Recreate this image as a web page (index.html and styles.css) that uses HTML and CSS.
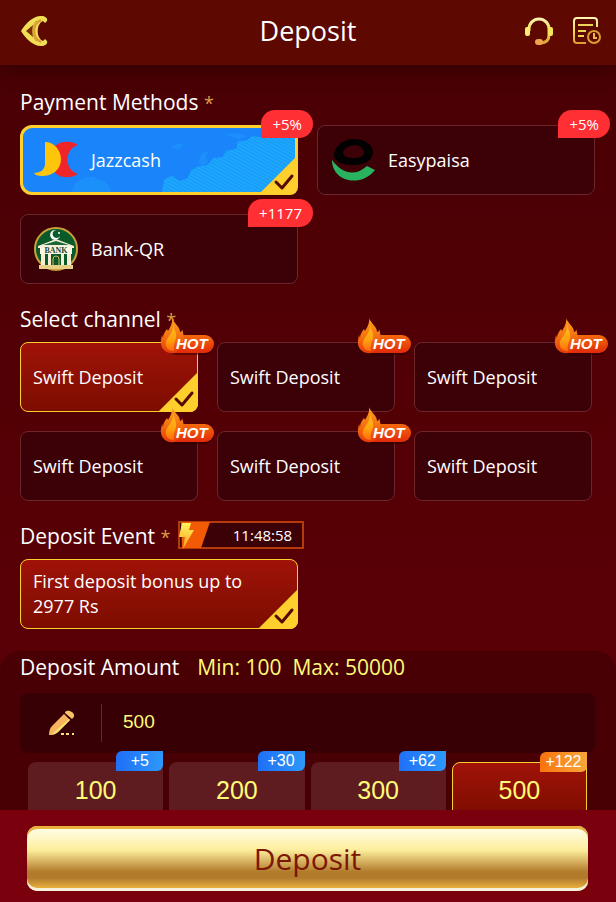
FILE: index.html
```html
<!DOCTYPE html>
<html lang="en">
<head>
    <meta charset="UTF-8">
    <meta name="viewport" content="width=device-width, initial-scale=1.0">
    <title>Deposit</title>
    <link rel="stylesheet" href="styles.css">
</head>
<body>
    <!-- shared icons -->
    <svg class="sprite" aria-hidden="true">
        <defs>
            <linearGradient id="goldLine" gradientUnits="userSpaceOnUse" x1="0" y1="0" x2="0" y2="30">
                <stop offset="0" stop-color="#fff9c0"/>
                <stop offset=".5" stop-color="#f3dc55"/>
                <stop offset="1" stop-color="#d8902a"/>
            </linearGradient>
            <linearGradient id="pill" x1="0" y1="0" x2="0" y2="1">
                <stop offset="0" stop-color="#f4690c"/>
                <stop offset="1" stop-color="#e12a0b"/>
            </linearGradient>
            <linearGradient id="flame" x1="0" y1="0" x2="0" y2="1">
                <stop offset="0" stop-color="#ffa51f"/>
                <stop offset=".6" stop-color="#f26a0f"/>
                <stop offset="1" stop-color="#e63a0b"/>
            </linearGradient>
            <linearGradient id="flameIn" x1="0" y1="0" x2="0" y2="1">
                <stop offset="0" stop-color="#ffbf1c"/>
                <stop offset=".6" stop-color="#ffa10f"/>
                <stop offset="1" stop-color="#ff6a0c"/>
            </linearGradient>
            <linearGradient id="bolt" x1="0" y1="0" x2="0" y2="1">
                <stop offset="0" stop-color="#fff45e"/>
                <stop offset="1" stop-color="#ff9d1c"/>
            </linearGradient>
            <pattern id="mesh" width="3" height="3" patternUnits="userSpaceOnUse" patternTransform="rotate(28)">
                <rect width="3" height="3" fill="#1b9cfb"/>
                <rect width="3" height="1" fill="#1aaffb"/>
            </pattern>
        </defs>
        <symbol id="tick" viewBox="0 0 40 40">
            <path d="M40 0v32a8 8 0 0 1-8 8H0z" fill="#ffcf2d"/>
            <path d="M18 27l6 6 10-12" fill="none" stroke="#560a05" stroke-width="3" stroke-linecap="round" stroke-linejoin="round"/>
        </symbol>
        <symbol id="hot" viewBox="0 0 56 40">
            <rect x="6" y="20" width="48" height="18" rx="9" fill="#2a0002" opacity=".5"/>
            <rect x="4" y="18" width="50" height="18" rx="9" fill="url(#pill)"/>
            <path d="M12 0c0 5 8 9 8 15 2-1 2-1 2-3 3 7 1 15-2 19-3 4-6 6-10 5C4 35 0 30 1 23l1-5 1 3c0-4 2-6 4-9l1 2c3-5 5-9 4-14z" fill="url(#flame)"/>
            <path d="M13 7c1 6 4 8 3 14-1 4-3 7-2 13-6 0-9-4-8-9s8-9 7-18z" fill="url(#flameIn)"/>
        </symbol>
    </svg>

    <div class="app">
        <header class="header">
            <button class="icon-btn back" type="button" aria-label="Back">
                <svg width="28" height="32" viewBox="0 0 28 32">
                    <path d="M1 16C6 8 13 1 21 1c4 0 7 2 6 5l-2 2-2-2c-7 3-7 17 0 20l2-2 2 2c1 3-2 5-6 5C13 31 6 24 1 16z" fill="#f0df55"/>
                    <path d="M21 5c-9 4-9 18 0 22" fill="none" stroke="#d9982f" stroke-width="2"/>
                    <path d="M17 6c-5 5-5 15 0 20" fill="none" stroke="#dca538" stroke-width="2"/>
                    <path d="M6 16l7-6c-1 4-1 8 0 12z" fill="#7d2c06"/>
                </svg>
            </button>
            <h1 class="header-title">Deposit</h1>
            <div class="header-actions">
                <button class="icon-btn" type="button" aria-label="Support">
                    <svg width="30" height="30" viewBox="0 0 30 30">
                        <path d="M5 15v-2a10 10 0 0 1 20 0v6c0 5-3 8-9 8" fill="none" stroke="url(#goldLine)" stroke-width="3"/>
                        <rect x="1" y="11" width="5" height="9" rx="2" fill="#f8ed70"/>
                        <rect x="24" y="11" width="5" height="9" rx="2" fill="#f5e45c"/>
                        <rect x="11" y="23" width="8" height="6" rx="3" fill="#efa34c"/>
                    </svg>
                </button>
                <button class="icon-btn" type="button" aria-label="Records">
                    <svg width="30" height="30" viewBox="0 0 30 30">
                        <path d="M25 11V5a3 3 0 0 0-3-3H5a3 3 0 0 0-3 3v19a3 3 0 0 0 3 3h9" fill="none" stroke="url(#goldLine)" stroke-width="2"/>
                        <path d="M6 9h15M6 15h8M6 20h6" stroke="#eed354" stroke-width="2"/>
                        <circle cx="22" cy="21" r="6" fill="none" stroke="#d99d30" stroke-width="2"/>
                        <path d="M22 17v5h3" fill="none" stroke="#e9bd45" stroke-width="2"/>
                    </svg>
                </button>
            </div>
        </header>

        <main class="content">
            <section class="section">
                <h2 class="section-title">Payment Methods <span class="star">*</span></h2>
                <div class="grid methods">
                    <label class="card card-blue">
                        <input class="card-radio" type="radio" name="method" checked>
                        <svg class="card-map" viewBox="0 0 270 62" preserveAspectRatio="none" aria-hidden="true">
                            <path d="M138 62l2-12 8-4 7 5 8-2 4-8 7-4 9-1 6-7 9-1 4-6 10-2 1-7 9-1 5-4 14 1 6-3 14 2 9-1v55z" fill="url(#mesh)"/>
                            <path d="M174 34l3-9 7-3-3 6 3 5-6 4zM146 18l9-3 5 1-6 5zM200 6l13-1 9 3-8 3zM48 62l4-9 9-5 8-1 5 3 7 2 4 4 2 6z" fill="#1b90fa"/>
                        </svg>
                        <svg class="card-logo" viewBox="0 0 44 44" aria-hidden="true">
                            <path d="M21 8c5-5 16-6 23-1-14 4-14 25 0 29-7 5-18 4-23-1z" fill="#f0252a"/>
                            <path d="M11 4c8-1 16 8 16 17 0 11-9 17-19 17-4 0-7-1-8-3 7 0 11-4 11-9z" fill="#ffc50a"/>
                        </svg>
                        <span class="card-name">Jazzcash</span>
                        <svg class="card-tick" aria-hidden="true"><use href="#tick"/></svg>
                        <span class="bonus">+5%</span>
                    </label>
                    <label class="card">
                        <input class="card-radio" type="radio" name="method">
                        <svg class="card-logo" viewBox="0 0 44 44" aria-hidden="true">
                            <path fill-rule="evenodd" d="M23 1c11 0 19 6 19 13 0 8-8 13-19 13S3 24 3 17C3 9 12 1 23 1zm1 6c-6 0-12 4-12 8 0 3 4 5 10 5 7 0 11-2 11-5 0-4-4-8-9-8z" fill="#000"/>
                            <path d="M1 22c11 15 24 16 35 6l8 4C30 50 1 44 1 22z" fill="#2ab35e"/>
                        </svg>
                        <span class="card-name">Easypaisa</span>
                        <span class="bonus">+5%</span>
                    </label>
                    <label class="card">
                        <input class="card-radio" type="radio" name="method">
                        <svg class="card-logo" viewBox="0 0 44 44" aria-hidden="true">
                            <circle cx="22" cy="22" r="21" fill="#0b5a2a" stroke="#c9a13c" stroke-width="2"/>
                            <path d="M22 3a5 5 0 1 0 4 6 4 4 0 1 1-4-6z" fill="#fff"/>
                            <circle cx="25" cy="6" r="1" fill="#fff"/>
                            <path d="M4 19L22 12l18 7v2H4z" fill="#f6efd6"/>
                            <path d="M9 18l13-4 13 4z" fill="#17693a"/>
                            <rect x="6" y="20" width="32" height="7" fill="#fdf8e6"/>
                            <text x="22" y="26" class="bank-text">BANK</text>
                            <path d="M7 27h4v12H7zM14 27h3v12h-3zM27 27h3v12h-3zM33 27h4v12h-4z" fill="#f6efd6"/>
                            <path d="M19 39v-7a3 3 0 0 1 6 0v7" fill="#0b5a2a" stroke="#d9b75a"/>
                            <path d="M5 38h34v4H5z" fill="#e8cf86"/>
                        </svg>
                        <span class="card-name">Bank-QR</span>
                        <span class="bonus">+1177</span>
                    </label>
                </div>
            </section>

            <section class="section">
                <h2 class="section-title">Select channel <span class="star">*</span></h2>
                <div class="grid channels">
                    <label class="card card-red">
                        <input class="card-radio" type="radio" name="channel" checked>
                        <span class="card-name">Swift Deposit</span>
                        <svg class="card-tick" aria-hidden="true"><use href="#tick"/></svg>
                        <span class="hot"><svg class="hot-bg" aria-hidden="true"><use href="#hot"/></svg><b class="hot-text">HOT</b></span>
                    </label>
                    <label class="card">
                        <input class="card-radio" type="radio" name="channel">
                        <span class="card-name">Swift Deposit</span>
                        <span class="hot"><svg class="hot-bg" aria-hidden="true"><use href="#hot"/></svg><b class="hot-text">HOT</b></span>
                    </label>
                    <label class="card">
                        <input class="card-radio" type="radio" name="channel">
                        <span class="card-name">Swift Deposit</span>
                        <span class="hot"><svg class="hot-bg" aria-hidden="true"><use href="#hot"/></svg><b class="hot-text">HOT</b></span>
                    </label>
                    <label class="card">
                        <input class="card-radio" type="radio" name="channel">
                        <span class="card-name">Swift Deposit</span>
                        <span class="hot"><svg class="hot-bg" aria-hidden="true"><use href="#hot"/></svg><b class="hot-text">HOT</b></span>
                    </label>
                    <label class="card">
                        <input class="card-radio" type="radio" name="channel">
                        <span class="card-name">Swift Deposit</span>
                        <span class="hot"><svg class="hot-bg" aria-hidden="true"><use href="#hot"/></svg><b class="hot-text">HOT</b></span>
                    </label>
                    <label class="card">
                        <input class="card-radio" type="radio" name="channel">
                        <span class="card-name">Swift Deposit</span>
                    </label>
                </div>
            </section>

            <section class="section">
                <div class="title-row">
                    <h2 class="section-title">Deposit Event <span class="star">*</span></h2>
                    <div class="timer">
                        <svg class="timer-bolt" width="32" height="28" viewBox="0 0 32 28" aria-hidden="true">
                            <path d="M3 1h29L23 27H4z" fill="#f25a06"/>
                            <path d="M4 2h9l-2 7h5L5 28l2-12H1z" fill="url(#bolt)"/>
                        </svg>
                        <span class="timer-text">11:48:58</span>
                    </div>
                </div>
                <div class="grid methods">
                    <label class="card card-red">
                        <input class="card-radio" type="radio" name="event" checked>
                        <span class="card-name">First deposit bonus up to 2977 Rs</span>
                        <svg class="card-tick" aria-hidden="true"><use href="#tick"/></svg>
                    </label>
                </div>
            </section>

            <section class="amount">
                <div class="title-row amount-title">
                    <h2 class="section-title"><label for="amount">Deposit Amount</label></h2>
                    <p class="limits"><span>Min: 100</span><span>Max: 50000</span></p>
                </div>
                <div class="amount-box">
                    <svg width="28" height="28" viewBox="0 0 28 28" aria-hidden="true">
                        <path d="M1 26c0-4 1-7 3-9L16 5l6 6L10 23c-2 2-5 3-9 3z" fill="#f6b45c"/>
                        <path d="M1 26l3-1L21 10l1 1L10 23c-2 2-5 3-9 3z" fill="#fbe373"/>
                        <path d="M17 3c4-4 12 2 8 6l-1 1-7-6z" fill="#f8c269"/>
                        <path d="M13 24h3v2h-3zM18 24h3v2h-3zM24 24h2v2h-2z" fill="#f9e27a"/>
                    </svg>
                    <input class="amount-input" id="amount" type="text" inputmode="numeric" value="500">
                </div>
                <div class="quick">
                    <button class="quick-btn" type="button">100<span class="quick-tag">+5</span></button>
                    <button class="quick-btn" type="button">200<span class="quick-tag">+30</span></button>
                    <button class="quick-btn" type="button">300<span class="quick-tag">+62</span></button>
                    <button class="quick-btn active" type="button">500<span class="quick-tag">+122</span></button>
                </div>
            </section>
        </main>

        <footer class="footer">
            <button class="submit" type="submit">Deposit</button>
        </footer>
    </div>
</body>
</html>
```

FILE: styles.css
```css
* {
    margin: 0;
    padding: 0;
    box-sizing: border-box;
}

body {
    font-family: 'Segoe UI', 'Open Sans', 'Noto Sans', sans-serif;
    background: #490004;
    color: #fff;
}

button,
input {
    font-family: inherit;
    border: none;
    background: none;
}

button {
    cursor: pointer;
}

.sprite {
    position: absolute;
    width: 0;
    height: 0;
}

.app {
    display: flex;
    flex-direction: column;
    height: 100vh;
}

/* header */
.header {
    display: grid;
    grid-template-columns: 1fr auto 1fr;
    align-items: center;
    height: 65px;
    padding: 0 14px 4px;
    background: #5d0800;
    box-shadow: 0 4px 20px rgba(0, 0, 0, 0.3);
    z-index: 1;
}

.icon-btn {
    display: flex;
    justify-self: start;
}

.back {
    padding-left: 6px;
}

.header-title {
    font-size: 27px;
    font-weight: 400;
}

.header-actions {
    display: flex;
    gap: 18px;
    justify-self: end;
}

/* sections */
.content {
    flex: 1;
    min-height: 0;
    overflow-y: auto;
    scrollbar-width: none;
    padding-top: 22px;
    background: linear-gradient(#490004, #590006 75%);
}

.section {
    padding: 0 21px 20px 20px;
}

.section-title {
    margin-bottom: 8px;
    font-size: 21px;
    font-weight: 400;
    line-height: 30px;
}

.star {
    color: #dc9c45;
    font-size: 18px;
    line-height: 1;
}

.title-row {
    display: flex;
    gap: 8px;
}

.grid {
    display: grid;
    gap: 19px;
}

.methods {
    grid-template-columns: repeat(2, 1fr);
}

.channels {
    grid-template-columns: repeat(3, 1fr);
    padding-right: 3px;
}

/* cards */
.card {
    position: relative;
    display: flex;
    align-items: center;
    gap: 13px;
    min-height: 70px;
    padding: 0 12px;
    border: 1px solid #6d252c;
    border-radius: 8px;
    background: #3b0107;
    cursor: pointer;
}

.card-radio {
    position: absolute;
    inset: 0;
    appearance: none;
    border-radius: 8px;
    cursor: pointer;
}

.card-logo {
    width: 44px;
    height: 44px;
    flex: none;
    position: relative;
}

.methods .card-logo {
    margin-left: 1px;
}

.card-name {
    position: relative;
    font-size: 18px;
    line-height: 25px;
}

.card-blue {
    padding: 0 10px;
    border: 3px solid #ffcf2d;
    border-radius: 12px;
    background: #1a84fa;
}

.card-map {
    position: absolute;
    inset: 0;
    width: 100%;
    height: 100%;
    border-radius: 9px;
}

.card-red {
    border-color: #ffcf2d;
    background: linear-gradient(#a01208, #7c0d00);
}

.card-tick {
    position: absolute;
    right: -1px;
    bottom: -1px;
    width: 40px;
    height: 40px;
}

.card-blue .card-tick {
    right: -3px;
    bottom: -3px;
}

.bonus {
    position: absolute;
    top: -16px;
    right: -16px;
    padding: 0 11px;
    border-radius: 14px 14px 14px 0;
    background: #ff2f33;
    font-size: 15px;
    line-height: 28px;
}

.card-blue .bonus {
    top: -18px;
    right: -18px;
}

/* flame badge on a card corner */
.hot {
    position: absolute;
    top: -26px;
    right: -19px;
    width: 56px;
    height: 40px;
    padding: 18px 0 0 16px;
}

.hot-bg {
    position: absolute;
    inset: 0;
    width: 56px;
    height: 40px;
}

.hot-text {
    position: relative;
    display: block;
    font: italic bold 15px/18px 'Liberation Sans', Arial, sans-serif;
}

.bank-text {
    font: bold 8px 'Liberation Serif', serif;
    text-anchor: middle;
    fill: #24482f;
}

/* countdown */
.timer {
    display: flex;
    align-items: center;
    width: 126px;
    height: 28px;
    border: 2px solid #b43b0b;
    background: #3b0107;
}

.timer-bolt {
    flex: none;
    margin-left: -2px;
}

.timer-text {
    flex: 1;
    padding-left: 12px;
    text-align: center;
    font-size: 15px;
}

/* amount */
.amount {
    margin-top: 2px;
    padding: 1px 21px 20px 20px;
    border-radius: 20px 20px 0 0;
    background: #490004;
}

.amount-title {
    gap: 18px;
}

.limits {
    display: flex;
    gap: 11px;
    color: #fffb76;
    font-size: 21px;
    line-height: 30px;
}

.amount-box {
    display: flex;
    align-items: center;
    height: 60px;
    margin-top: 3px;
    padding-left: 28px;
    border-radius: 8px;
    background: #360004;
}

.amount-input {
    flex: 1;
    min-width: 0;
    height: 38px;
    margin-left: 25px;
    padding: 0 21px 3px;
    border-left: 1px solid #6d252c;
    color: #fffb76;
    font: 19px 'Liberation Sans', Arial, sans-serif;
    outline: none;
}

.quick {
    display: grid;
    grid-template-columns: repeat(4, 1fr);
    gap: 6px;
    padding: 9px 8px 0;
}

.quick-btn {
    position: relative;
    height: 56px;
    border-radius: 8px 0 0 0;
    background: #5e1b20;
    color: #fffb76;
    font: 25px 'Liberation Sans', Arial, sans-serif;
}

.quick-tag {
    position: absolute;
    top: -11px;
    right: 0;
    width: 47px;
    border-radius: 6px 0 6px 0;
    background: linear-gradient(90deg, #1f6ff5, #2e98fb);
    color: #fff;
    font-size: 16px;
    line-height: 20px;
}

.quick-btn.active {
    border: 1px solid #ffcf2d;
    background: linear-gradient(#a01208, #7c0d00);
}

.quick-btn.active .quick-tag {
    right: -1px;
    background: linear-gradient(90deg, #f9730f, #f9a73a);
}

/* footer */
.footer {
    padding: 16px 28px 11px 27px;
    background: #7a000d;
}

.submit {
    display: block;
    width: 100%;
    height: 65px;
    border-radius: 10px;
    background: linear-gradient(#fffde6 3px, #fdee9c 24px, #b27a2b 46px, #b27a2b 52px, #e9b03c 62px);
    box-shadow: inset 0 3px #e9b03c, inset 0 -3px #f8f2dc;
    color: #7d1704;
    font-size: 30px;
}
```
